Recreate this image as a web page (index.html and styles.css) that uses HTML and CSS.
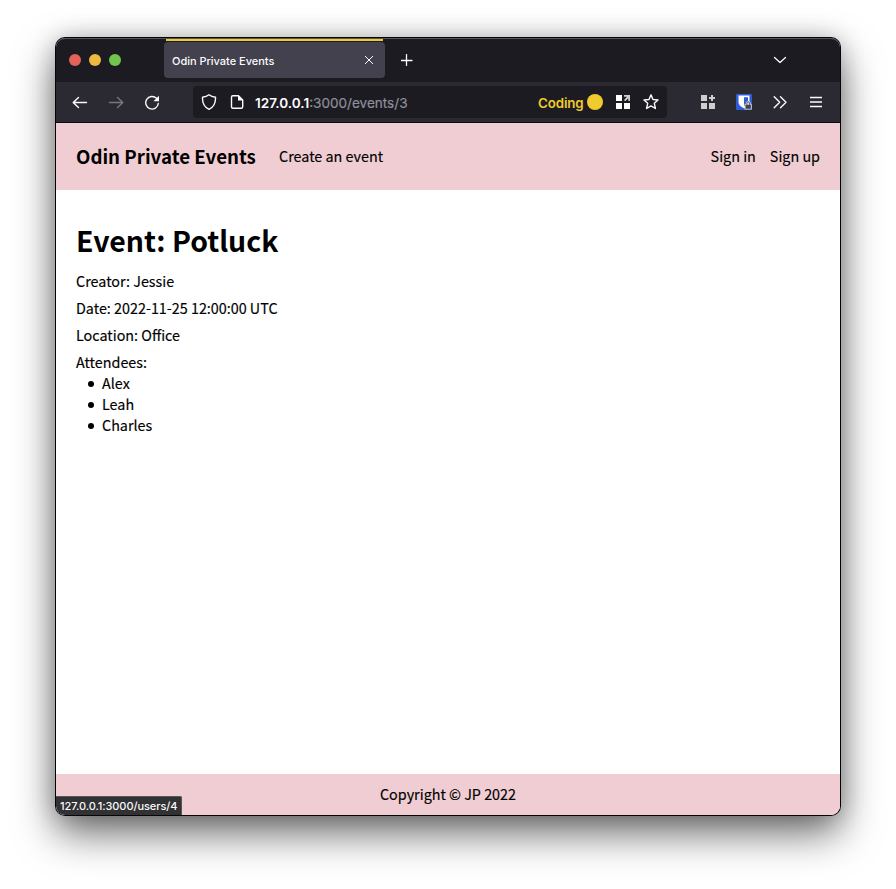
FILE: index.html
```html
<!DOCTYPE html>
<html lang="en">
<head>
<meta charset="utf-8">
<title>Odin Private Events</title>
<link rel="stylesheet" href="styles.css">
</head>
<body>
<div class="window">
  <div class="tabs">
    <div class="lights"><i class="red"></i><i class="amber"></i><i class="green"></i></div>
    <div class="tab"><span class="tab-title">Odin Private Events</span>
      <svg class="close" width="8" height="8" viewBox="0 0 8 8"><path d="M.3.3l7.4 7.4M7.7.3L.3 7.7"/></svg>
    </div>
    <svg class="plus" width="12" height="12" viewBox="0 0 12 12"><path d="M5.500 .5v11M0 6.500h11"/></svg>
    <svg class="chevron" width="14" height="8" viewBox="0 0 14 8"><path d="M1.500 1.500L7 6.500l5.500-5"/></svg>
  </div>
  <div class="toolbar">
    <svg class="nav" viewBox="0 0 16 16"><path d="M14.500 8.500H1.5M6.500 3.500L1.2 8.500l5.300 5"/></svg>
    <svg class="nav dim" viewBox="0 0 16 16"><path d="M1.500 8.500h13M9.500 3.500l5.300 5-5.300 5"/></svg>
    <svg class="nav reload" viewBox="0 0 16 16"><path d="M14.3 9.500A6.300 6.300 0 1 1 12.500 4.300"/><path class="solid" d="M15 1.800v5.500H9.500z"/></svg>
    <div class="url">
      <svg class="glyph" viewBox="0 0 16 16"><path d="M8 .8c2 1.5 4 2.1 6.5 2.4C14.8 9 12.5 13.3 8 15.3 3.500 13.300 1.200 9 1.500 3.200 4 2.900 6 2.300 8 .8z"/></svg>
      <svg class="glyph" viewBox="0 0 16 16"><path d="M3.800 1.800h5.700l4.200 4.200v6.800q0 1.500-1.500 1.500H4q-1.500 0-1.500-1.500V3.200q0-1.400 1.300-1.400z"/><path class="solid" d="M9 1.200v5.300h5.200z"/></svg>
      <div class="address"><b>127.0.0.1</b>:3000/events/3</div>
      <div class="container-name">Coding</div><i class="container-dot"></i>
      <svg class="glyph grid" viewBox="0 0 16 16"><path class="solid" d="M1 1h6v6H1zM1 9h6v6H1zM9 9h6v6H9z"/><path class="grey" d="M9 1h6v6h-1.700V4.200l-3 3L9 6l3-3.200H9z"/></svg>
      <svg class="glyph star" viewBox="0 0 16 16"><path d="M8 .9l2 4.600 5 .5-3.700 3.300 1.100 5.200L8 11.900l-4.400 2.600 1.100-5.200L1 6l5-.5z"/></svg>
    </div>
    <div class="extras">
      <svg class="ext" viewBox="0 0 16 16"><path class="grey" d="M1 1h6v6H1zM1 9h6v6H1zM9 9h6v6H9z"/><path class="plus-line" d="M12 1v6M9 4h6"/></svg>
      <svg class="ext" viewBox="0 0 16 16"><rect class="blue" width="16" height="16" rx="1"/><path class="solid" d="M2.500 1.500h11v6.500c0 3-2.500 4.800-5.500 6.300-3-1.500-5.500-3.300-5.500-6.300z"/><path class="blue" d="M8 3.200h4v5c0 1.500-1.700 2.600-4 4z"/><path class="badge" d="M8.500 10.300h1.200V9a2.600 2.600 0 0 1 5 0v1.300h1v5.200H8.500z"/><path class="badge-body" d="M9.500 10.800h5.400v4H9.500z"/><path class="badge-cut" d="M10.900 10.500V9.200a1.300 1.300 0 0 1 2.600 0v1.300"/></svg>
      <svg class="ext" viewBox="0 0 16 16"><path d="M2.200 2.800L7.700 8.300l-5.500 5.500M8.500 2.800L14 8.300l-5.500 5.500"/></svg>
      <svg class="ext" viewBox="0 0 16 16"><path class="menu" d="M2 3.500h12M2 8h12M2 12.500h12"/></svg>
    </div>
  </div>
  <header>
    <div class="brand">Odin Private Events</div>
    <a class="create">Create an event</a>
    <a class="signin">Sign in</a>
    <a class="signup">Sign up</a>
  </header>
  <main>
    <h1>Event: Potluck</h1>
    <p>Creator: Jessie</p>
    <p>Date: 2022-11-25 12:00:00 UTC</p>
    <p>Location: Office</p>
    <p>Attendees:</p>
    <ul><li>Alex</li><li>Leah</li><li>Charles</li></ul>
  </main>
  <footer>Copyright © JP 2022</footer>
  <div class="status">127.0.0.1:3000/users/4</div>
</div>
</body>
</html>
```
FILE: styles.css
```css
* { box-sizing: border-box; }
body { margin: 0; height: 889px; padding: 38px 56px; background: #fff; overflow: hidden;
  font: 14.35px/21px "Noto Sans CJK JP", sans-serif; color: #000; }
.window { position: relative; display: flex; flex-direction: column; width: 784px; height: 777px;
  border-radius: 9px; background: #fff;
  box-shadow: 0 0 0 1px #050505, 0 18px 40px rgba(0,0,0,.58), 0 0 24px rgba(0,0,0,.22); }
svg { flex: none; fill: none; stroke: #fbfbfe; stroke-width: 1.4; stroke-linecap: round; stroke-linejoin: round; }
.solid { fill: #fff; stroke: none; }
.grey { fill: #ceced0; stroke: none; }
.blue { fill: #2f5bd7; stroke: none; }
.badge { fill: #e3e3e3; stroke: none; }
.badge-body { fill: #444; stroke: none; }
.badge-cut { stroke: #555; stroke-width: 1; }
.plus-line { stroke: #ceced0; stroke-width: 2; stroke-linecap: butt; }
.menu { stroke-width: 1.3; stroke-linecap: butt; }

.tabs { display: flex; align-items: center; height: 44px; padding-left: 13px; background: #1c1b22;
  border-radius: 9px 9px 0 0; box-shadow: inset 0 1px #55545b; }
.lights { display: flex; gap: 8px; width: 95px; }
.lights i { width: 12px; height: 12px; border-radius: 50%; }
.red { background: #e1635a; }
.amber { background: #edb93f; }
.green { background: #72c44c; }
.tab { position: relative; display: flex; align-items: center; justify-content: space-between; width: 221px; height: 36px;
  padding: 0 12px 0 8px; background: #42414d; border-radius: 4px; color: #fbfbfe; }
.tab::before { content: ""; position: absolute; top: -3px; left: 2px; right: 2px; height: 2px; background: #f0cb2d; }
.tab-title { padding-top: 2px; font: 500 11px/16px Inter, sans-serif; letter-spacing: -.02px; }
.close { stroke-width: 1; }
.plus { margin-left: 16px; stroke-width: 1.3; }
.chevron { margin-left: 360px; stroke-width: 1.3; }

.toolbar { display: flex; align-items: center; height: 41px; padding-left: 16px; background: #2b2a33; border-bottom: 1px solid #0c0c0d; }
.nav { width: 16px; height: 16px; margin-right: 20px; }
.dim { stroke: #77767e; }
.reload { margin-right: 33px; }
.url { display: flex; align-items: center; width: 474px; height: 32px; padding-left: 8px; background: #1c1b22; border-radius: 4px; }
.glyph { width: 16px; height: 16px; margin-right: 12px; }
.address { width: 283px; margin-left: -2px; padding-top: 2px; font: 13.550px/18px Inter, sans-serif; color: #8f8f98; -webkit-text-stroke: .2px; white-space: nowrap; }
.address b { font-weight: 600; color: #fbfbfe; -webkit-text-stroke: 0; }
.container-name { width: 49px; padding-top: 2px; font: 600 13.300px/18px Inter, sans-serif; letter-spacing: -.1px; color: #f0cb2d; }
.container-dot { width: 16px; height: 16px; border-radius: 50%; background: #f0cb2d; margin-right: 12px; }
.star { margin-right: 0; }
.extras { display: flex; gap: 20px; margin-left: 33px; }
.ext { width: 16px; height: 16px; }

header { display: flex; align-items: center; height: 67px; padding: 0 20px 2px; background: #f0cdd3; }
.brand { width: 203px; padding-bottom: 1px; font-size: 18.700px; font-weight: 700; white-space: nowrap; }
.signin { margin-left: auto; margin-right: 14px; }
a, p, li, footer { -webkit-text-stroke: .15px #000; }
main { flex: 1; padding: 29px 20px 0; }
h1 { margin: 0 0 10px; font-size: 28.45px; line-height: 41px; font-weight: 700; }
p { margin: 0 0 6px; }
p:last-of-type { margin: 0; }
ul { margin: 0; padding-left: 12px; list-style: none; }
li { display: flex; align-items: center; gap: 8px; }
li::before { content: ""; width: 6px; height: 6px; border-radius: 50%; background: #000; margin-top: 2px; }
footer { height: 41px; padding-bottom: 2px; display: flex; align-items: center; justify-content: center; background: #f0cdd3; border-radius: 0 0 9px 9px; }
.status { position: absolute; left: 0; bottom: 0; width: 126px; height: 19px; padding-left: 4px;
  background: #323234; color: #f9f9fa; border: solid #55555c; border-width: 1px 1px 0 0;
  border-radius: 0 2px 0 9px; font: 500 11px/18px Inter, sans-serif; letter-spacing: -.07px; white-space: nowrap; }
```
